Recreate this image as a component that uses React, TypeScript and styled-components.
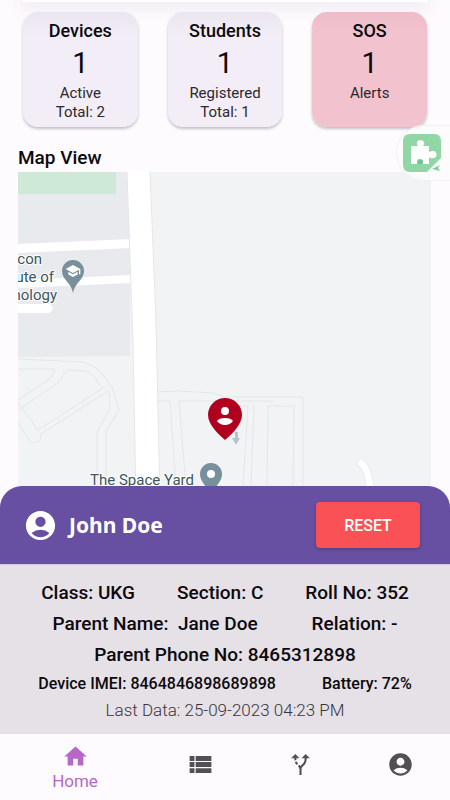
import React from 'react';
import styled, { createGlobalStyle } from 'styled-components';
import { MdAccountCircle, MdAltRoute, MdHome, MdSchool, MdViewList } from 'react-icons/md';

const GlobalStyle = createGlobalStyle`
  *, *::before, *::after { box-sizing: border-box; }
  body {
    margin: 0;
    background: #fefbff;
    color: #0b090d;
    font-family: Roboto, "Liberation Sans", sans-serif;
  }
  h1, h2, p { margin: 0; }
`;

const Page = styled.div`
  display: flex;
  flex-direction: column;
  min-height: 100vh;
  overflow: hidden;
`;

const TopBar = styled.header`
  height: 2px;
  margin: 0 22px;
  background: #ffffff;
  border-radius: 0 0 8px 8px;
  box-shadow: 0 2px 16px 2px rgba(60, 40, 70, 0.16);
`;

const Stats = styled.section`
  display: grid;
  grid-template-columns: repeat(3, 1fr);
  gap: 30px;
  padding: 10px 23px 0;
`;

const StatCard = styled.article<{ $alert?: boolean }>`
  display: flex;
  flex-direction: column;
  align-items: center;
  height: 115px;
  padding-top: 8px;
  border-radius: 15px;
  background: ${({ $alert }) =>
    $alert
      ? 'linear-gradient(#edbeca, #f2c2ce 24px)'
      : 'linear-gradient(#eae6ee, #f2edf6 24px)'};
  box-shadow: 0 2px 3px rgba(0, 0, 0, 0.24);
  white-space: nowrap;
`;

const StatTitle = styled.h2`
  font-size: 18px;
  font-weight: 500;
  line-height: 22px;
`;

const StatValue = styled.p`
  font-size: 29px;
  line-height: 42px;
`;

const StatNote = styled.p`
  font-size: 15px;
  line-height: 19px;
  color: #2b282f;
`;

const MapTitle = styled.h1`
  padding: 20px 18px 3px;
  font-size: 19px;
  font-weight: 500;
  line-height: 22px;
`;

const MapArea = styled.section`
  display: flex;
  flex: 1 0 314px;
  margin: 0 19px -14px 18px;
  overflow: hidden;
  background: #f1f3f4;
`;

const MapSvg = styled.svg`
  display: block;
  width: 100%;
  height: 328px;
`;

const MapLabel = styled.text`
  font-family: Roboto, "Liberation Sans", sans-serif;
  font-size: 15px;
  fill: #3b5561;
  stroke: #ffffff;
  stroke-width: 2px;
  stroke-linejoin: round;
  paint-order: stroke;
`;

const AssistTab = styled.button`
  position: absolute;
  top: 125px;
  right: 0;
  display: flex;
  align-items: center;
  width: 54px;
  height: 56px;
  padding: 0 0 0 5px;
  border: 1px solid #f3f0f3;
  border-right: 0;
  border-radius: 28px 0 0 28px;
  background: rgba(253, 252, 253, 0.85);
`;

const Sheet = styled.section`
  position: relative;
  overflow: hidden;
  border-radius: 22px 22px 0 0;
  background: #e6e1e6;
`;

const SheetHeader = styled.div`
  display: flex;
  align-items: center;
  gap: 11px;
  height: 79px;
  padding: 0 30px 0 23px;
  border-bottom: 1px solid #d5c5e6;
  background: #674fa1;
  color: #ffffff;
`;

const StudentName = styled.h2`
  flex: 1;
  font-family: "Noto Sans", "Open Sans", sans-serif;
  font-size: 21px;
  font-weight: 700;
  line-height: 28px;
`;

const ResetButton = styled.button`
  width: 104px;
  height: 46px;
  border: 0;
  border-radius: 4px;
  background: #f95156;
  box-shadow: 0 1px 3px rgba(0, 0, 0, 0.25);
  color: #ffffff;
  font: 500 16px Roboto, "Liberation Sans", sans-serif;
`;

const Details = styled.div`
  display: flex;
  flex-direction: column;
  padding: 12px 0 10px;
`;

const DetailRow = styled.div<{ $gap?: number; $small?: boolean }>`
  display: flex;
  justify-content: center;
  gap: ${({ $gap = 0 }) => $gap}px;
  font-size: ${({ $small }) => ($small ? 16 : 19)}px;
  font-weight: 500;
  line-height: ${({ $small }) => ($small ? 27 : 31)}px;
  white-space: pre;
`;

const LastData = styled.p`
  font-size: 17px;
  font-weight: 300;
  line-height: 27px;
  text-align: center;
  color: #38343b;
`;

const Nav = styled.nav`
  display: grid;
  grid-template-columns: 3fr 2fr 2fr 2fr;
  height: 66px;
  background: #fefbff;
`;

const NavLink = styled.a<{ $active?: boolean }>`
  display: flex;
  flex-direction: column;
  align-items: center;
  justify-content: center;
  padding-bottom: ${({ $active }) => ($active ? 0 : 6)}px;
  color: ${({ $active }) => ($active ? '#b767c7' : '#535055')};
  font-size: 17px;
  line-height: 22px;
  text-decoration: none;
`;

function MapDrawing() {
  return (
    <MapSvg viewBox="0 0 413 328" preserveAspectRatio="xMinYMin slice" role="img" aria-label="Map">
      <rect width="413" height="328" fill="#f1f3f4" />
      <path d="M0 0H112V184L0 185Z" fill="#e8eaed" />
      <path d="M0 0H98V22H0Z" fill="#ceead6" />
      <g fill="#ffffff">
        <path d="M109 0H132L138 150L142 328H118L115 170Z" />
        <path d="M0 72L114 67V76L0 81Z" />
        <path d="M0 108L114 103V111L0 116Z" />
        <path d="M0 132H30A4 4 0 0 1 30 141H0Z" />
      </g>
      <path d="M343 291Q352 298 353 328" fill="none" stroke="#dfe1e3" strokeWidth="8" strokeLinecap="round" />
      <path d="M343 291Q352 298 353 328" fill="none" stroke="#ffffff" strokeWidth="7" strokeLinecap="round" />
      <g fill="none" stroke="#e4e7e8" strokeWidth="1">
        <path d="M132 0L138 150L142 328M109 0L115 170L118 328" />
        <path d="M0 187L65 190Q79 194 84 202L94 215L101 238L88 260V328" />
        <path d="M0 197H37L33 206L0 228M0 238L40 211L49 198L67 199Q76 200 80 211L85 216L20 258L0 231M91 219L92 237L79 260V328M90 219L23 262L22 268Q17 274 11 268L0 251" />
        <path d="M139 220L160 219L195 221L207 225H285V314M139 229H152L158 314M161 229L168 314M161 229H255M207 234H230L225 314M233 314L236 233M249 314L250 234H276L275 314" />
      </g>
      <g>
        <path d="M55 121C53 110 44 108 44 99A11 11 0 0 1 66 99C66 108 57 110 55 121Z" fill="#78909c" />
        <MdSchool x="47" y="91" size={16} color="#ffffff" />
      </g>
      <g textAnchor="end">
        <MapLabel x="24" y="92">con</MapLabel>
        <MapLabel x="36" y="110">ute of</MapLabel>
        <MapLabel x="39" y="128">nology</MapLabel>
        <MapLabel x="176" y="313">The Space Yard</MapLabel>
      </g>
      <path d="M193 324C190 314 182 311 182 302A11 11 0 0 1 204 302C204 311 196 314 193 324Z" fill="#78909c" />
      <circle cx="193" cy="302" r="4" fill="#ffffff" />
      <path d="M217 260H220V266H222L218 273L214 266H217Z" fill="#b8c0cd" />
      <path d="M207 268C199 261 190 252 190 243A17 17 0 0 1 224 243C224 252 215 261 207 268Z" fill="#b00020" />
      <circle cx="207" cy="239" r="4" fill="#ffffff" />
      <path d="M199 249Q201 246 207 246Q213 246 215 249Q212 253 207 253Q202 253 199 249Z" fill="#ffffff" />
    </MapSvg>
  );
}

function PuzzleIcon() {
  return (
    <svg width="40" height="40" viewBox="0 0 40 40" aria-hidden="true">
      <path d="M8 1H32Q39 1 39 8V25L25 39H8Q1 39 1 32V8Q1 1 8 1Z" fill="#91d7a5" />
      <path
        d="M10 13H16Q14 11 15 9A4 4 0 0 1 22 9Q23 11 21 13H27V19Q29 18 31 18A3.5 3.5 0 0 1 31 25Q29 26 27 24V31H21Q22 26 18 26Q14 26 15 31H10Q9 31 9 30V14Q9 13 10 13Z"
        fill="#ffffff"
      />
      <path d="M16 31V28Q18 25 21 28L20 31Z" fill="#6bc397" />
      <path d="M38 32L30 36L38 38L36 35Z" fill="#7fce99" />
    </svg>
  );
}

const stats = [
  { title: 'Devices', value: 1, notes: ['Active', 'Total: 2'] },
  { title: 'Students', value: 1, notes: ['Registered', 'Total: 1'] },
  { title: 'SOS', value: 1, notes: ['Alerts'], alert: true },
];

export default function App() {
  return (
    <Page>
      <GlobalStyle />
      <TopBar />
      <Stats>
        {stats.map((s) => (
          <StatCard key={s.title} $alert={s.alert}>
            <StatTitle>{s.title}</StatTitle>
            <StatValue>{s.value}</StatValue>
            {s.notes.map((n) => (
              <StatNote key={n}>{n}</StatNote>
            ))}
          </StatCard>
        ))}
      </Stats>
      <MapTitle>Map View</MapTitle>
      <MapArea>
        <MapDrawing />
      </MapArea>
      <AssistTab type="button" aria-label="Extensions">
        <PuzzleIcon />
      </AssistTab>
      <Sheet>
        <SheetHeader>
          <MdAccountCircle size={35} />
          <StudentName>John Doe</StudentName>
          <ResetButton type="button">RESET</ResetButton>
        </SheetHeader>
        <Details>
          <DetailRow $gap={42}>
            <span>Class: UKG</span>
            <span>Section: C</span>
            <span>Roll No: 352</span>
          </DetailRow>
          <DetailRow $gap={54}>
            <span>{'Parent Name:  Jane Doe'}</span>
            <span>Relation: -</span>
          </DetailRow>
          <DetailRow>
            <span>Parent Phone No: 8465312898</span>
          </DetailRow>
          <DetailRow $gap={46} $small>
            <span>Device IMEI: 8464846898689898</span>
            <span>Battery: 72%</span>
          </DetailRow>
          <LastData>Last Data: 25-09-2023 04:23 PM</LastData>
        </Details>
      </Sheet>
      <Nav aria-label="Main">
        <NavLink href="#home" $active aria-current="page">
          <MdHome size={27} />
          Home
        </NavLink>
        <NavLink href="#list" aria-label="List">
          <MdViewList size={29} />
        </NavLink>
        <NavLink href="#routes" aria-label="Routes">
          <MdAltRoute size={25} />
        </NavLink>
        <NavLink href="#account" aria-label="Account">
          <MdAccountCircle size={27} />
        </NavLink>
      </Nav>
    </Page>
  );
}
